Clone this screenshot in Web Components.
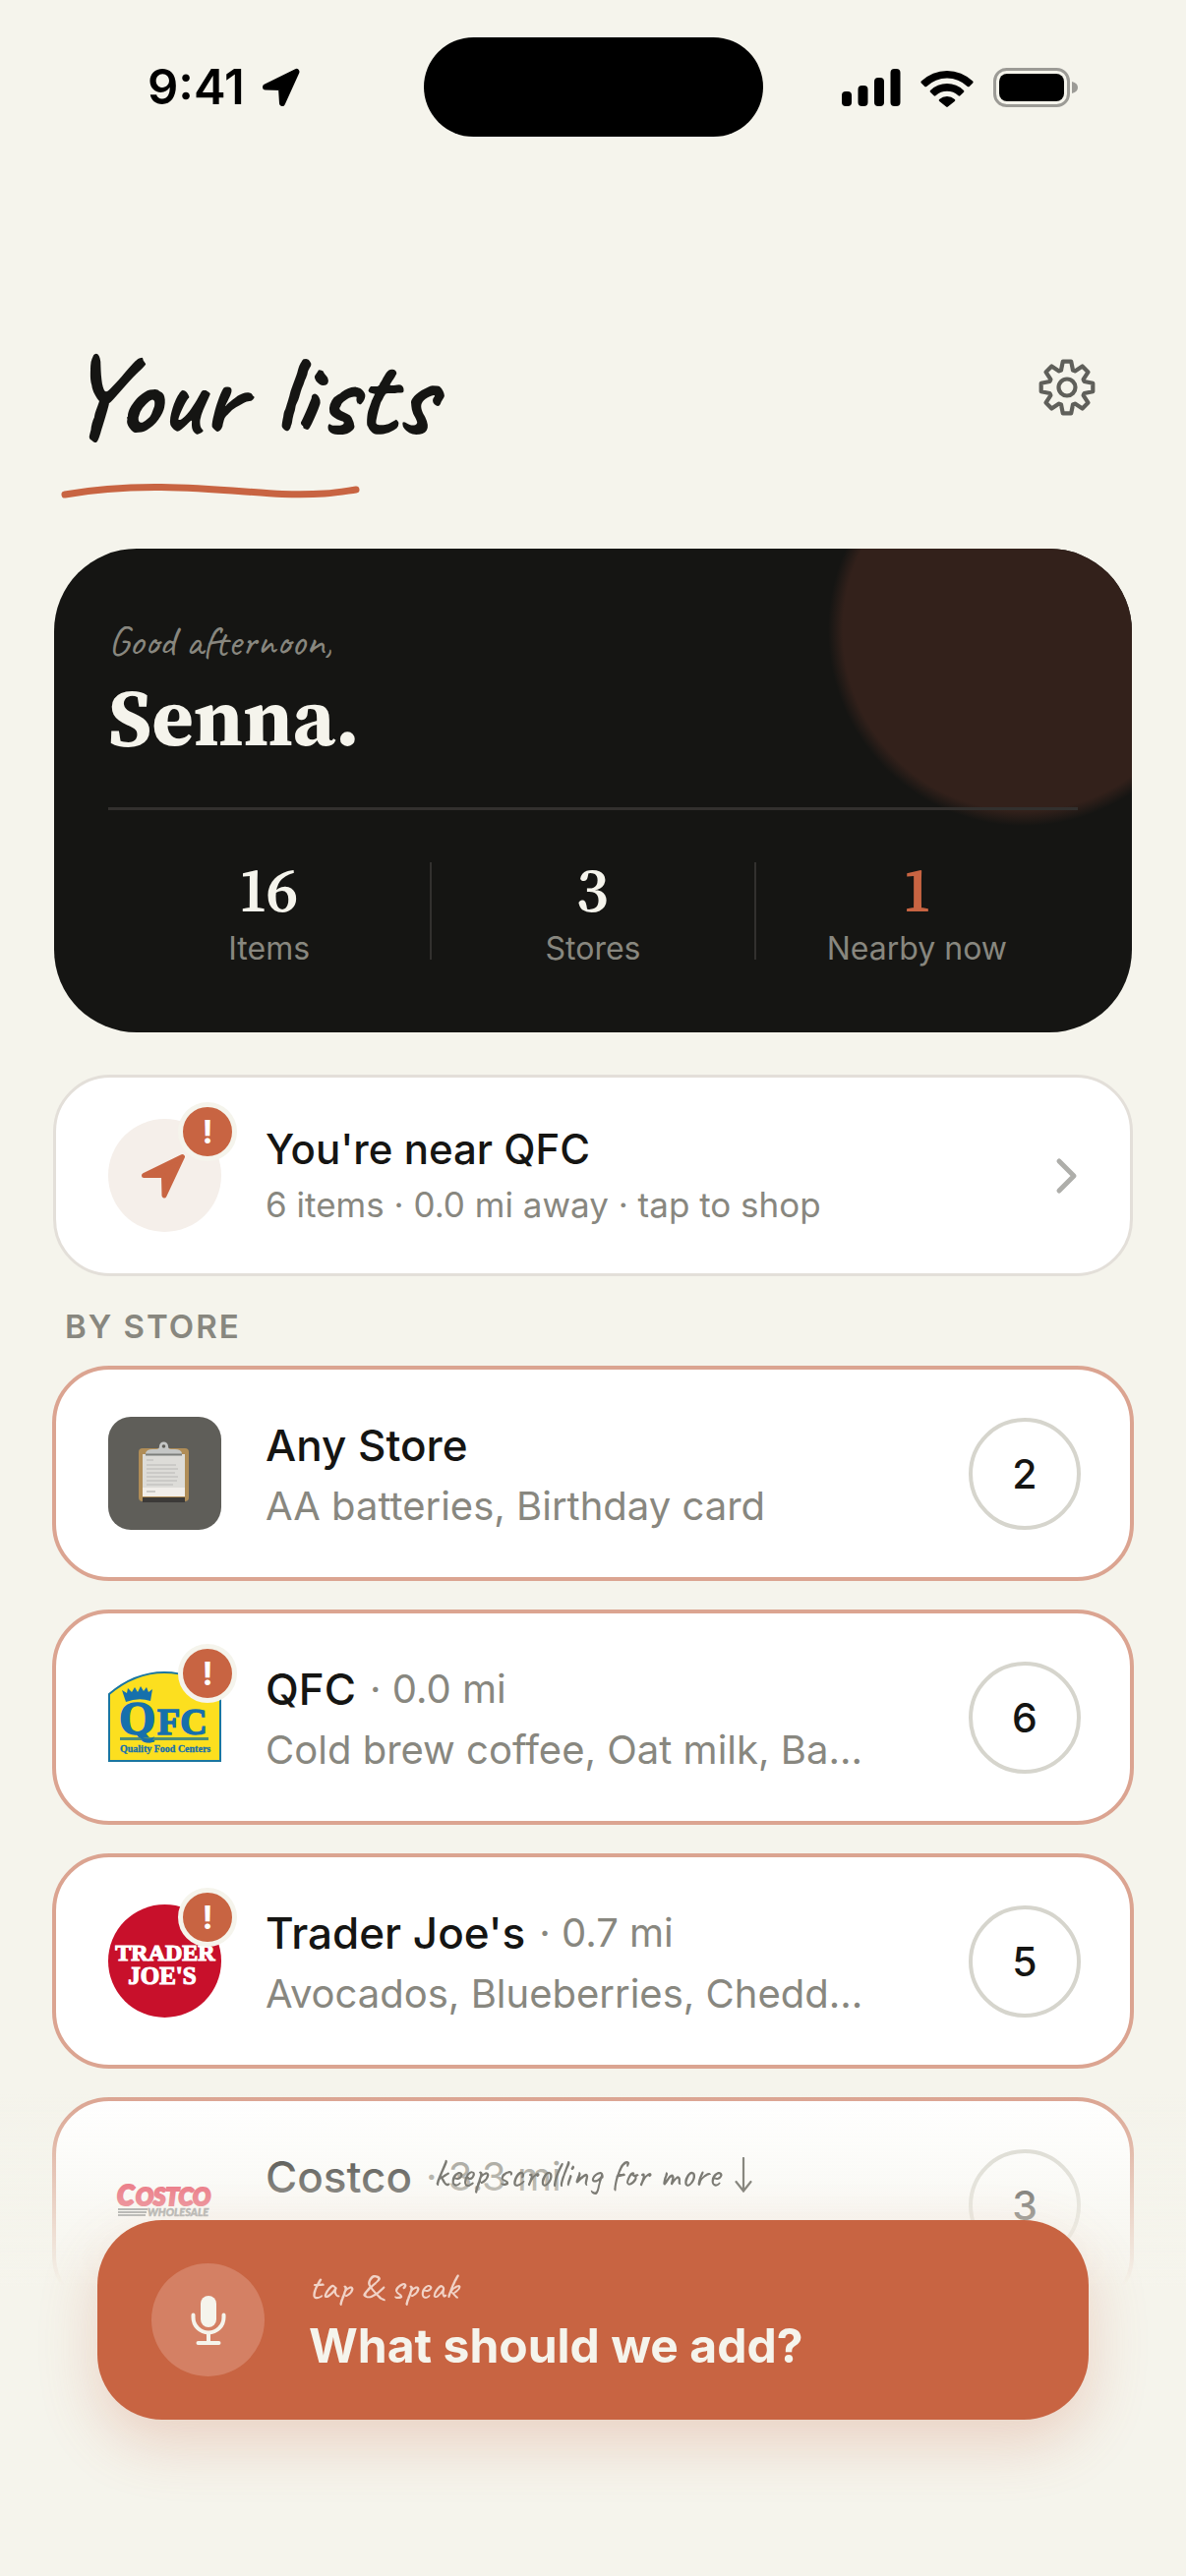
<!DOCTYPE html>
<html lang="en">
<head>
<meta charset="utf-8">
<meta name="viewport" content="width=device-width, initial-scale=1">
<title>Your lists</title>
<style>
  :root {
    --paper: #f5f4ec;
    --ink: #151513;
    --muted: #88877f;
    --accent: #c86442;
    --script: Caveat, Lato, "Open Sans", sans-serif;
    --serif: "Source Serif 4", "Source Serif Pro", "Liberation Serif", serif;
  }
  body {
    margin: 0;
    min-height: 100vh;
    background: var(--paper);
    color: var(--ink);
    font-family: Inter, "Liberation Sans", sans-serif;
  }
</style>
</head>
<body>
<lists-screen></lists-screen>

<script>
const define = (name, html, setup) => customElements.define(name, class extends HTMLElement {
  constructor() {
    super();
    const template = document.createElement('template');
    template.innerHTML = html;
    this.attachShadow({ mode: 'open' }).append(template.content.cloneNode(true));
  }
  connectedCallback() { if (setup) setup(this, this.shadowRoot); }
});

define('status-bar', `
  <style>
    :host { display: grid; grid-template-columns: 1fr 345px 1fr; align-items: center; padding-top: 38px; color: #000; }
    .time { display: flex; align-items: center; gap: 17px; padding-left: 150px; font-size: 49px; line-height: 60px; font-weight: 600; }
    .island { height: 101px; border-radius: 51px; background: #000; }
    .signals { display: flex; align-items: center; justify-content: flex-end; gap: 20px; padding-right: 110px; }
    svg { display: block; }
  </style>
  <div class="time"><span>9:41</span>
    <svg width="40" height="40" viewBox="0 0 40 40"><path d="M4 19.5 35.5 4 21 36 20 20Z" stroke="#000" stroke-width="6" stroke-linejoin="round"/></svg>
  </div>
  <div class="island"></div>
  <div class="signals">
    <svg width="60" height="40" viewBox="0 0 60 40"><rect y="24" width="10" height="15" rx="4"/><rect x="16.500" y="18" width="10" height="21" rx="4"/><rect x="33" y="10" width="10" height="29" rx="4"/><rect x="49.500" y="1" width="10" height="38" rx="4"/></svg>
    <svg width="54" height="40" viewBox="0 0 54 40">
      <path d="M.8 13.600a37.500 37.500 0 0 1 52.400 0q.8.900 0 1.800l-3.500 3.500q-.9.900-1.900 0a30 30 0 0 0-41.600 0q-1 .9-1.900 0L.8 15.400q-.8-.9 0-1.800Z"/>
      <path d="M10 22.900a24.500 24.500 0 0 1 34 0q.9.900 0 1.800l-3.600 3.600q-.9.900-1.900 0a17 17 0 0 0-23 0q-1 .9-1.900 0L10 24.700q-.9-.9 0-1.800Z"/>
      <path d="M19.200 32a12 12 0 0 1 15.600 0q1 .9 0 1.900l-6.900 5.700q-.9.800-1.800 0l-6.900-5.700q-1-1 0-1.900Z"/>
    </svg>
    <svg width="86" height="40" viewBox="0 0 86 40"><rect x="1.500" y="1.500" width="75" height="37" rx="12" fill="none" stroke="#9c9b96" stroke-width="3"/><rect x="6" y="6" width="66" height="28" rx="8"/><path d="M80 14q6 1.500 6 6t-6 6Z" fill="#9c9b96"/></svg>
  </div>`);

define('page-heading', `
  <style>
    :host { display: block; padding: 200px 66px 0; }
    .row { display: flex; justify-content: space-between; align-items: flex-start; }
    h1 { margin: 0; font: 700 118px/126px var(--script); }
    button { display: grid; place-items: center; width: 110px; height: 110px; padding: 0; border: 0; background: none; color: #5f5f5a; }
    .stroke { display: block; margin: 24px 0 0 -4px; }
  </style>
  <div class="row">
    <h1><slot></slot></h1>
    <button type="button" aria-label="Settings">
      <svg width="58" height="58" viewBox="0 0 58 58" fill="none" stroke="currentColor" stroke-width="4.200" stroke-linejoin="round"><path id="gear"/><circle cx="29" cy="29" r="8.500"/></svg>
    </button>
  </div>
  <svg class="stroke" width="306" height="20" viewBox="0 0 306 20" fill="none"><path d="M4 14C90 -2 180 12 225 13.500S285 11 300 9" stroke="#c86442" stroke-width="7" stroke-linecap="round"/></svg>`,
  (host, root) => {
    // Eight teeth: each has two root points and two tip points.
    const points = [];
    for (let i = 0; i < 8; i++) {
      for (const [offset, radius] of [[-19, 18.500], [-9, 26.600], [9, 26.600], [19, 18.500]]) {
        const a = (i * 45 + offset - 90) * Math.PI / 180;
        points.push((29 + radius * Math.cos(a)).toFixed(1) + ' ' + (29 + radius * Math.sin(a)).toFixed(1));
      }
    }
    root.getElementById('gear').setAttribute('d', 'M' + points.join('L') + 'Z');
  });

define('stat-item', `
  <style>
    :host { display: block; flex: 1; text-align: center; }
    .n { height: 60px; font: 600 64px/56px var(--serif); font-variant-numeric: lining-nums proportional-nums; color: var(--stat, var(--paper)); }
    .l { font-size: 32px; line-height: 56px; color: var(--muted); }
  </style>
  <div class="n"><slot name="value"></slot></div><div class="l"><slot></slot></div>`);

define('summary-card', `
  <style>
    :host { display: block; position: relative; overflow: hidden; margin: 49px 55px 0; padding: 58px 55px 57px; border-radius: 84px; background: var(--ink); color: var(--paper); }
    .glow { position: absolute; top: -117px; right: -90px; width: 400px; height: 400px; background: radial-gradient(circle, #33211b 184px, transparent 199px); }
    .body { position: relative; }
    .hello { font: 400 43px/72px var(--script); color: var(--muted); }
    .name { margin: 0; font: 700 82px/82px var(--serif); }
    hr { height: 3px; margin: 51px 0 53px; border: 0; background: #32302e; }
    .stats { display: flex; }
    .stats i { width: 2px; height: 99px; background: #32302e; }
    .near { --stat: var(--accent); }
  </style>
  <div class="glow"></div>
  <div class="body">
    <div class="hello">Good afternoon,</div>
    <h2 class="name"><slot></slot></h2>
    <hr>
    <div class="stats">
      <stat-item><span slot="value">16</span>Items</stat-item><i></i>
      <stat-item><span slot="value">3</span>Stores</stat-item><i></i>
      <stat-item class="near"><span slot="value">1</span>Nearby now</stat-item>
    </div>
  </div>`);

define('alert-badge', `
  <style>
    :host { position: absolute; top: -17px; right: -16px; display: grid; place-items: center; box-sizing: border-box; width: 60px; height: 60px; border: 5px solid var(--paper); border-radius: 50%; background: var(--accent); color: #fff; font-size: 33px; line-height: 40px; font-weight: 700; }
  </style>!`);

define('nearby-card', `
  <style>
    :host { display: block; margin: 43px 54px 0; }
    a { display: flex; align-items: center; gap: 45px; padding: 42px 53px; border: 3px solid #e3dfd9; border-radius: 58px; background: #fff; color: inherit; text-decoration: none; }
    .icon { position: relative; display: grid; place-items: center; width: 115px; height: 115px; border-radius: 50%; background: #f5efea; }
    .icon svg { margin-right: 4px; }
    .text { flex: 1; }
    .title { font-size: 42px; line-height: 58px; font-weight: 500; }
    .sub { font-size: 35px; line-height: 54px; color: var(--muted); }
  </style>
  <a href="#qfc">
    <div class="icon">
      <svg width="46" height="46" viewBox="0 0 46 46"><path d="M3.500 22.500 42.500 3.500 24 43 23.500 22.500Z" fill="#c86442" stroke="#c86442" stroke-width="5" stroke-linejoin="round"/></svg>
      <alert-badge></alert-badge>
    </div>
    <div class="text"><div class="title"><slot name="title"></slot></div><div class="sub"><slot></slot></div></div>
    <svg width="23" height="40" viewBox="0 0 23 40" fill="none" stroke="#aeaeaa" stroke-width="5" stroke-linecap="round" stroke-linejoin="round"><path d="M4 5 19 20 4 35"/></svg>
  </a>`);

define('section-label', `
  <style>
    :host { display: block; padding: 31px 66px 20px; }
    h2 { margin: 0; font-size: 33px; line-height: 40px; font-weight: 600; letter-spacing: 2px; color: var(--muted); }
  </style>
  <h2><slot></slot></h2>`);

define('store-card', `
  <style>
    :host { display: block; }
    a { display: flex; align-items: center; gap: 45px; padding: 44px 50px 44px 53px; border: 4px solid #dba491; border-radius: 58px; background: #fff; color: inherit; text-decoration: none; }
    .logo { position: relative; flex: none; width: 115px; height: 115px; }
    .text { flex: 1; min-width: 0; white-space: nowrap; }
    .title { display: flex; align-items: center; gap: 14px; font-size: 44px; line-height: 66px; font-weight: 500; }
    .distance { font-size: 40px; font-weight: 400; color: var(--muted); }
    .sub { height: 57px; font-size: 40px; line-height: 57px; color: var(--muted); }
    .count { flex: none; display: grid; place-items: center; box-sizing: border-box; width: 114px; height: 114px; border: 4px solid #d6d5cd; border-radius: 50%; font-size: 41px; font-weight: 500; }
  </style>
  <a href="#store">
    <div class="logo"><slot name="logo"></slot></div>
    <div class="text"><div class="title"><slot name="name"></slot><span class="distance"></span></div><div class="sub"><slot></slot></div></div>
    <div class="count"></div>
  </a>`,
  (host, root) => {
    const distance = host.getAttribute('distance');
    const slot = root.querySelector('.distance');
    if (distance) slot.textContent = '· ' + distance; else slot.remove();
    root.querySelector('.count').textContent = host.getAttribute('count');
    if (host.hasAttribute('alert') && !root.querySelector('alert-badge')) root.querySelector('.logo').append(document.createElement('alert-badge'));
  });

const logoStyle = '<style>:host,svg{display:block}</style>';

define('logo-clipboard', logoStyle + `
  <svg width="115" height="115" viewBox="0 0 115 115">
    <rect width="115" height="115" rx="23" fill="#5f5e59"/>
    <rect x="31" y="32" width="51" height="54" rx="4" fill="#b08d57"/>
    <path d="M35 82H78V87H35Z" fill="#3c3a38"/>
    <path d="M35 38H78V81H35Z" fill="#dddcd8"/><path d="M35 72H78V81H35Z" fill="#f1eeea"/>
    <path d="M39 44H46M39 49H69M39 53H71M39 57H68M39 61H71M39 65H70M39 69H66M39 76H48" stroke="#cbcac7" stroke-width="1.800"/>
    <path d="M38 39v-2q1-4 7-4h4q3 0 3-3a4.500 4.500 0 0 1 9 0q0 3 3 3h4q6 0 7 4v2Z" fill="#c4c6c5"/><circle cx="56.500" cy="30" r="1.800" fill="#5f5e59"/>
    <path d="M38 38.500H75" stroke="#7d7f7c" stroke-width="2"/>
  </svg>`);

define('logo-qfc', logoStyle + `
  <svg width="115" height="115" viewBox="0 0 115 115" fill="#1670ac">
    <path d="M1 34Q27 12 57 12T114 34V102H1Z" fill="#fcdf1f" stroke="#1a76a0" stroke-width="2"/>
    <path d="M18 42 14 30l5 3 1-5 4 4 3-5 3 5 3-6 3 5 3-4 2 5 4-3-2 12Q31 37 18 42Z"/>
    <g font-family="Liberation Serif, serif" font-weight="700" stroke="#1670ac"><text x="11" y="75" font-size="48" stroke-width="1.500">Q</text><text x="50" y="75" font-size="38" stroke-width="1.500">FC</text><text x="12" y="93" font-size="10" stroke-width=".3">Quality Food Centers</text></g>
    <path d="M12 78H102V81H12Z" fill="#4f8d73"/>
    <path d="M28 72Q39 84 47 77L44 83Q35 85 28 72Z"/>
  </svg>`);

define('logo-trader', logoStyle + `
  <svg width="115" height="115" viewBox="0 0 115 115">
    <circle cx="57.500" cy="57.500" r="57.500" fill="#c8102b"/>
    <g fill="#fff" stroke="#fff" stroke-width="1.200" text-anchor="middle" font-family="Liberation Serif, serif" font-weight="700"><text x="58" y="57" font-size="24">TRADER</text><text x="55" y="81" font-size="25">JOE'S</text></g>
  </svg>`);

define('logo-costco', logoStyle + `
  <svg width="115" height="115" viewBox="0 0 115 115" font-family="Lato, sans-serif" font-style="italic" font-weight="900">
    <g fill="#e31936" stroke="#e31936" stroke-width="2.200"><text x="9" y="58" font-size="28">C</text><text x="28" y="58" font-size="24">OSTCO</text></g>
    <text x="40" y="69" font-size="11" fill="#5d6468" stroke="#5d6468" stroke-width=".5">WHOLESALE</text>
    <path d="M10 62H40M10 65H39M10 68H38" stroke="#5d6468" stroke-width="1.800"/>
  </svg>`);

define('voice-dock', `
  <style>
    :host { position: fixed; left: 0; right: 0; bottom: 0; display: block; padding: 54px 99px 159px; background: linear-gradient(rgba(245,244,236,0), #f5f4ec 195px); }
    .hint { margin: 0; display: flex; align-items: center; justify-content: center; gap: 15px; height: 56px; padding-bottom: 18px; font: 400 39px/56px var(--script); color: #7c7b74; }
    button { display: flex; align-items: center; gap: 45px; width: 100%; padding: 42px 55px; border: 0; border-radius: 66px; background: var(--accent); color: var(--paper); font-family: inherit; text-align: left; box-shadow: 0 24px 60px rgba(200,100,66,.24); }
    .mic { flex: none; display: grid; place-items: center; width: 115px; height: 115px; border-radius: 50%; background: #d48064; }
    .small { display: block; font: 400 38px/52px var(--script); color: #f1d3c7; }
    .big { display: block; font-size: 48px; line-height: 67px; font-weight: 700; }
  </style>
  <p class="hint"><span>keep scrolling for more</span>
    <svg width="18" height="36" viewBox="0 0 18 36" fill="none" stroke="#88877f" stroke-width="2.200" stroke-linecap="round"><path d="M9 1V34M1.500 25 9 34.500 16.500 25"/></svg>
  </p>
  <button type="button">
    <span class="mic"><svg width="36" height="52" viewBox="0 0 36 52" fill="none" stroke="#f5f4ec" stroke-width="4" stroke-linecap="round"><rect x="10" y="1" width="16" height="32" rx="8" fill="#f5f4ec" stroke="none"/><path d="M2.500 20.500V23a15.500 15.500 0 0 0 31 0v-2.500M18 39v9M7.500 49h21"/></svg></span>
    <span><span class="small">tap &amp; speak</span><span class="big">What should we add?</span></span>
  </button>`);

define('lists-screen', `
  <style>
    :host { display: block; }
    .stores { display: grid; gap: 29px; padding: 0 53px; }
  </style>
  <status-bar></status-bar>
  <main>
    <page-heading>Your lists</page-heading>
    <summary-card>Senna.</summary-card>
    <nearby-card><span slot="title">You're near QFC</span>6 items · 0.0 mi away · tap to shop</nearby-card>
    <section-label>BY STORE</section-label>
    <div class="stores">
      <store-card count="2"><logo-clipboard slot="logo"></logo-clipboard><span slot="name">Any Store</span>AA batteries, Birthday card</store-card>
      <store-card count="6" distance="0.0 mi" alert><logo-qfc slot="logo"></logo-qfc><span slot="name">QFC</span>Cold brew coffee, Oat milk, Ba...</store-card>
      <store-card count="5" distance="0.7 mi" alert><logo-trader slot="logo"></logo-trader><span slot="name">Trader Joe's</span>Avocados, Blueberries, Chedd...</store-card>
      <store-card count="3" distance="3.3 mi"><logo-costco slot="logo"></logo-costco><span slot="name">Costco</span></store-card>
    </div>
  </main>
  <voice-dock></voice-dock>`);
</script>
</body>
</html>
